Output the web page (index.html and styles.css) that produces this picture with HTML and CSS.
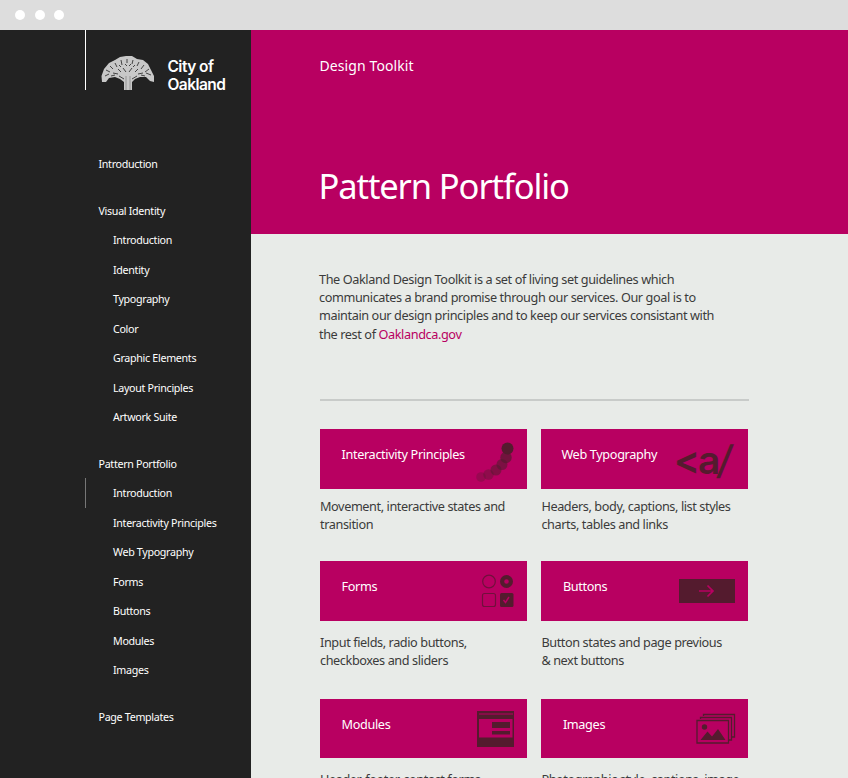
FILE: index.html
```html
<!DOCTYPE html>
<html lang="en">
<head>
<meta charset="utf-8">
<title>Pattern Portfolio</title>
<link rel="stylesheet" href="styles.css">
</head>
<body>
<div class="chrome"><i class="dot"></i><i class="dot"></i><i class="dot"></i></div>
<div class="page">
  <aside class="sidebar">
    <div class="brand">
      <svg class="tree" width="54" height="35" viewBox="0 0 54 35">
        <path class="canopy" d="M1 26 0.500 20 3 13 8 7 14 4 19 1 25 0 31 0 36 3 42 4 47 8 50 14 53 20 53 26 49 25 45 21 39 21 34 23 31 26V34H23V26L19 23 14 21 8 22 5 26Z"/>
        <path class="gaps" d="M4 20l4-2M5 14l4 2M9 10l3 3M14 7l2 4M20 4l1 5M26 3v4M32 4l-1 4M38 6l-2 4M43 9l-3 4M48 13l-4 3M50 19l-5-2M12 17l5 1M17 13l3 3M22 12l3 4M31 12l-3 4M37 13l-3 3M42 17l-5 1M24 8l2 2M30 8l-2 2M10 20l4-1M44 20l-4-1M18 20l5 3M36 20l-5 3M34 9l-2 2M18 9l2 2"/>
        <path class="trunk" d="M25 34V20M29 34V20"/>
      </svg>
      <div class="brand-name">City of<br>Oakland</div>
    </div>
    <nav class="nav">
      <a class="top">Introduction</a>
      <a class="top">Visual Identity</a>
      <a>Introduction</a>
      <a>Identity</a>
      <a>Typography</a>
      <a>Color</a>
      <a>Graphic Elements</a>
      <a>Layout Principles</a>
      <a>Artwork Suite</a>
      <a class="top">Pattern Portfolio</a>
      <a class="current">Introduction</a>
      <a>Interactivity Principles</a>
      <a>Web Typography</a>
      <a>Forms</a>
      <a>Buttons</a>
      <a>Modules</a>
      <a>Images</a>
      <a class="top">Page Templates</a>
    </nav>
  </aside>
  <main class="main">
    <header class="hero">
      <div class="kicker">Design Toolkit</div>
      <h1>Pattern Portfolio</h1>
    </header>
    <p class="intro">The Oakland Design Toolkit is a set of living set guidelines which<br>communicates a brand promise through our services. Our goal is to<br>maintain our design principles and to keep our services consistant with<br>the rest of <a>Oaklandca.gov</a></p>
    <section class="cards">
      <article class="card">
        <div class="tile"><h2>Interactivity Principles</h2>
          <svg class="icon" width="60" height="60" viewBox="0 0 60 60">
            <circle cx="11" cy="48" r="4.800" opacity=".3"/><circle cx="18.500" cy="45.500" r="5.200" opacity=".4"/><circle cx="26" cy="41" r="5.500" opacity=".55"/><circle cx="32" cy="35.500" r="5.500" opacity=".6"/><circle cx="36" cy="28.500" r="5.700" opacity=".7"/><circle cx="37.500" cy="19.500" r="6"/>
          </svg></div>
        <p>Movement, interactive states and<br>transition</p>
      </article>
      <article class="card">
        <div class="tile"><h2 class="pull">Web Typography</h2><span class="tag">&lt;a<span class="slash">/</span></span></div>
        <p>Headers, body, captions, list styles<br>charts, tables and links</p>
      </article>
      <article class="card forms">
        <div class="tile"><h2>Forms</h2>
          <svg class="icon" width="60" height="60" viewBox="0 0 60 60">
            <circle class="line" cx="19" cy="20.500" r="6.300"/><circle class="ring" cx="36.500" cy="20.500" r="4.400"/>
            <rect class="line" x="12.500" y="32.500" width="13" height="13" rx="2"/><rect x="30" y="32" width="13.500" height="14" rx="1.500"/><path class="check" d="M33.500 39l2 2.500 3.500-5.500"/>
          </svg></div>
        <p>Input fields, radio buttons,<br>checkboxes and sliders</p>
      </article>
      <article class="card forms">
        <div class="tile"><h2>Buttons</h2>
          <svg class="icon wide" width="80" height="60" viewBox="0 0 80 60">
            <rect x="9" y="18" width="56" height="24"/><path class="arrow" d="M29 30h14M37.500 24.500l5.500 5.500-5.500 5.500"/>
          </svg></div>
        <p>Button states and page previous<br>&amp; next buttons</p>
      </article>
      <article class="card forms">
        <div class="tile"><h2>Modules</h2>
          <svg class="icon" width="60" height="60" viewBox="0 0 60 60">
            <path fill-rule="evenodd" d="M7 12h37v36H7ZM9 20v18.500h33.500V20ZM9 14.500v1h34v-1Z"/><rect x="22" y="23" width="18" height="6"/><rect x="22" y="32" width="18" height="3.500"/>
          </svg></div>
        <p>Header, footer, contact forms,</p>
      </article>
      <article class="card forms">
        <div class="tile"><h2>Images</h2>
          <svg class="icon wide" width="80" height="60" viewBox="0 0 80 60">
            <path class="frame" d="M33.500 17V15.500H64.500V38H62M30.500 20V18.500H61.500V41H59M27 21.500h31.500v22.500h-31.500Z"/><circle cx="34.500" cy="28" r="2.700"/><path d="M30.500 41l7-8.500 4.500 5 6-7.500 7.500 11Z"/>
          </svg></div>
        <p>Photographic style, captions, image</p>
      </article>
    </section>
  </main>
</div>
</body>
</html>
```
FILE: styles.css
```css
* { box-sizing: border-box; }
html, body { margin: 0; height: 100%; overflow: hidden; }
body { display: flex; flex-direction: column; font-family: "Noto Sans", sans-serif; background: #e8ebe8; color: #3b3b3b; }
h1, h2, p { margin: 0; font-weight: 400; }
.chrome { flex: none; display: flex; align-items: center; gap: 9.5px; height: 30px; padding-left: 15px; background: #ddd; }
.dot { width: 10px; height: 10px; border-radius: 50%; background: #fff; }
.page { flex: 1; min-height: 0; display: flex; }
.sidebar { width: 251px; flex: none; background: #222; color: #fff; }
.brand { display: flex; height: 60px; margin-left: 84.5px; border-left: 1.5px solid #fff; padding: 26px 0 0 15px; }
.tree { flex: none; }
.canopy { fill: #c8c8c8; }
.gaps { fill: none; stroke: #444; stroke-width: 1; }
.trunk { fill: none; stroke: #888; stroke-width: .8; }
.brand-name { margin: 2px 0 0 13px; font: 600 15.5px/18px Inter, sans-serif; letter-spacing: -.55px; white-space: nowrap; }
.nav { display: flex; flex-direction: column; margin: 42px 0 0 84.5px; }
.nav a { height: 29.5px; line-height: 30px; padding-left: 28.5px; font-size: 10.7px; letter-spacing: -.31px; white-space: nowrap; }
.nav .top { padding-left: 14px; margin-top: 17px; }
.nav .current { border-left: 1px solid #777; padding-left: 27.5px; }
.main { flex: 1; min-width: 0; }
.hero { height: 204px; padding: 24px 0 0 68.5px; background: #b80061; color: #fff; }
.kicker { font-size: 14px; line-height: 24px; letter-spacing: .1px; }
h1 { margin: 81px 0 0 -1px; font-size: 34.5px; line-height: 54px; letter-spacing: -1.1px; white-space: nowrap; }
.intro { margin: 35.7px 0 0 68px; font-size: 12.7px; line-height: 18.3px; letter-spacing: -.4px; white-space: nowrap; }
.intro a { color: #b80061; }
.cards { display: grid; grid-template-columns: 207px 207px; grid-template-rows: 132px 137.5px 100px; column-gap: 14.4px; width: 428.5px; margin: 56.1px 0 0 69px; padding-top: 28.3px; border-top: 2px solid #c8cbc9; }
.tile { display: flex; height: 59.5px; background: #b80061; color: #fff; }
.tile h2 { width: 0; flex: 1; padding-left: 21.5px; font-size: 12.7px; line-height: 50px; letter-spacing: -.35px; white-space: nowrap; }
.tile .pull { padding-left: 20px; }
.card p { margin-top: 8.4px; font-size: 12.7px; line-height: 18.3px; letter-spacing: -.41px; white-space: nowrap; }
.card.forms p { margin-top: 12.2px; }
.icon { flex: none; margin-right: -3px; fill: #541b2e; }
.icon.wide { margin-right: -1.5px; }
.icon .line { fill: none; stroke: #71103c; stroke-width: 1.2; }
.icon .ring { fill: none; stroke: #541b2e; stroke-width: 4.2; }
.icon .check { fill: none; stroke: #b80061; stroke-width: 1.5; }
.icon .arrow { fill: none; stroke: #b80061; stroke-width: 1.7; }
.icon .frame { fill: none; stroke: #541b2e; stroke-width: 1.3; }
.tag { margin-right: 15.5px; color: #541b2e; font: 600 39px/62px Inter, sans-serif; letter-spacing: -2px; }
.slash { display: inline-block; transform: skewX(-8deg); font-weight: 500; letter-spacing: 0; }
```
